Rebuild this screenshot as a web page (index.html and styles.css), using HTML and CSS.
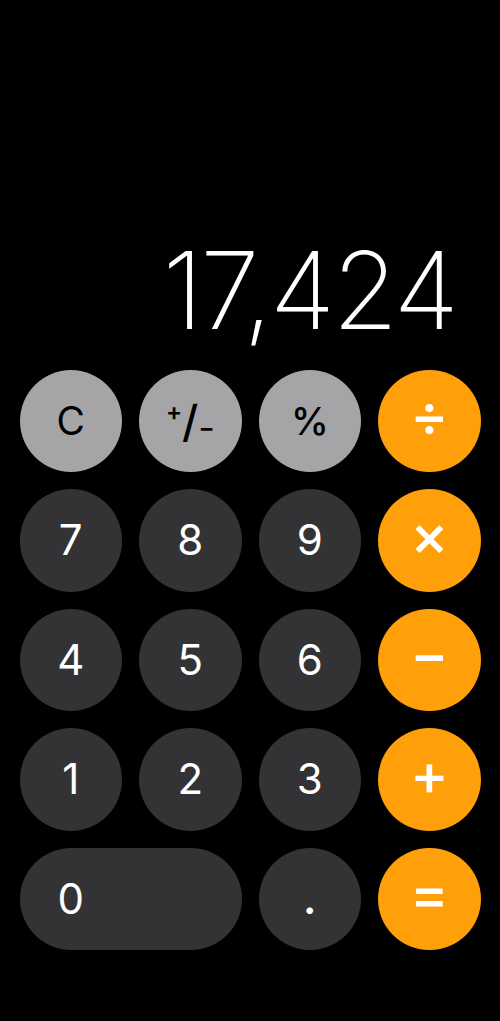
FILE: index.html
```html
<!DOCTYPE html>
<html lang="en">
<head>
<meta charset="utf-8">
<title>Calculator</title>
<link rel="stylesheet" href="styles.css">
</head>
<body>
<main class="calc">
  <section class="display"><div class="result">17,424</div></section>
  <section class="keypad">
    <button class="key fn">C</button>
    <button class="key fn sign"><span class="sup">+</span><span class="sl">/</span><span class="sub">−</span></button>
    <button class="key fn pct">%</button>
    <button class="key op">÷</button>

    <button class="key num">7</button>
    <button class="key num">8</button>
    <button class="key num">9</button>
    <button class="key op">×</button>

    <button class="key num">4</button>
    <button class="key num">5</button>
    <button class="key num">6</button>
    <button class="key op">−</button>

    <button class="key num">1</button>
    <button class="key num">2</button>
    <button class="key num">3</button>
    <button class="key op">+</button>

    <button class="key num zero"><span class="zlabel">0</span></button>
    <button class="key num dot">.</button>
    <button class="key op">=</button>
  </section>
</main>
</body>
</html>
```
FILE: styles.css
```css
html, body {
  margin: 0;
  padding: 0;
  background: #000;
}
body {
  font-family: Inter, "Liberation Sans", sans-serif;
  color: #fff;
}
.calc {
  height: 1021px;
  display: flex;
  flex-direction: column;
}
.display {
  flex: 1;
  display: flex;
  justify-content: flex-end;
  align-items: flex-end;
  padding: 0 44px 0 0;
}
.result {
  font-size: 107px;
  font-weight: 200;
  line-height: 108px;
  letter-spacing: -3px;
  margin-bottom: 26px;
}
.keypad {
  display: grid;
  grid-template-columns: repeat(4, 102.5px);
  grid-auto-rows: 102.5px;
  column-gap: 17px;
  row-gap: 17px;
  padding: 0 19px 71px 19.5px;
}
.key {
  border: none;
  margin: 0;
  padding: 0;
  border-radius: 52px;
  font-family: Inter, "Liberation Sans", sans-serif;
  display: flex;
  align-items: center;
  justify-content: center;
  font-size: 42px;
  font-weight: 400;
  line-height: 1;
}
.num {
  background: #333335;
  color: #fff;
}
.fn {
  background: #a5a5a7;
  color: #000;
  font-size: 39px;
}
.op {
  background: #ff9f0a;
  color: #fff;
  font-size: 58px;
  font-weight: 500;
  padding-bottom: 11px;
}
.zero {
  grid-column: span 2;
  justify-content: flex-start;
}
.zlabel {
  width: 102.5px;
  text-align: center;
}
.sign {
  font-weight: 500;
}
.sign .sup {
  font-size: 24px;
  font-weight: 600;
  position: relative;
  top: -9px;
}
.sign .sl {
  font-size: 44px;
  font-weight: 500;
}
.sign .sub {
  font-size: 24px;
  font-weight: 600;
  position: relative;
  top: 7px;
}
.pct {
  font-size: 38px;
  font-weight: 500;
}
.dot {
  font-size: 42px;
  font-weight: 600;
}
```
